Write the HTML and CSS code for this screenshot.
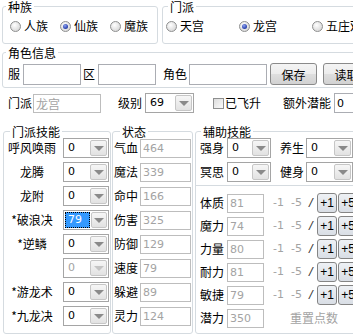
FILE: index.html
```html
<!DOCTYPE html>
<html lang="zh">
<head>
    <meta charset="UTF-8">
    <title>角色编辑</title>
    <link rel="stylesheet" href="styles.css">
</head>
<body>
    <div class="dialog">
        <div class="top-row">
            <div class="group race">
                <span class="group-title">种族</span>
                <label class="radio"><span class="dot"></span>人族</label>
                <label class="radio"><span class="dot on"></span>仙族</label>
                <label class="radio"><span class="dot"></span>魔族</label>
            </div>
            <div class="group sect">
                <span class="group-title">门派</span>
                <label class="radio"><span class="dot"></span>天宫</label>
                <label class="radio"><span class="dot on"></span>龙宫</label>
                <label class="radio"><span class="dot"></span>五庄观</label>
            </div>
        </div>

        <div class="group info">
            <span class="group-title">角色信息</span>
            <span class="lbl">服</span>
            <input type="text" class="edit server">
            <span class="lbl area-lbl">区</span>
            <input type="text" class="edit area">
            <span class="lbl role-lbl">角色</span>
            <input type="text" class="edit role">
            <button class="btn save">保存</button>
            <button class="btn load">读取</button>
        </div>

        <div class="line2">
            <span class="lbl">门派</span>
            <input type="text" class="edit dis sect-edit" value="龙宫" disabled>
            <span class="lbl level-lbl">级别</span>
            <div class="combo level"><span class="val">69</span><span class="arrow"></span></div>
            <span class="check"></span>
            <span class="lbl fly-lbl">已飞升</span>
            <span class="lbl extra-lbl">额外潜能</span>
            <input type="text" class="edit extra" value="0">
        </div>

        <div class="bottom">
            <div class="group skills">
                <span class="group-title">门派技能</span>
                <div class="srow"><span class="sname">呼风唤雨</span><div class="combo sk"><span class="val">0</span><span class="arrow"></span></div></div>
                <div class="srow"><span class="sname">龙腾</span><div class="combo sk"><span class="val">0</span><span class="arrow"></span></div></div>
                <div class="srow"><span class="sname">龙附</span><div class="combo sk"><span class="val">0</span><span class="arrow"></span></div></div>
                <div class="srow"><span class="sname">*破浪决</span><div class="combo sk focus"><span class="val">79</span><span class="arrow"></span></div></div>
                <div class="srow"><span class="sname">*逆鳞</span><div class="combo sk"><span class="val">0</span><span class="arrow"></span></div></div>
                <div class="srow"><span class="sname"></span><div class="combo sk off"><span class="val">0</span><span class="arrow"></span></div></div>
                <div class="srow"><span class="sname">*游龙术</span><div class="combo sk"><span class="val">0</span><span class="arrow"></span></div></div>
                <div class="srow"><span class="sname">*九龙决</span><div class="combo sk"><span class="val">0</span><span class="arrow"></span></div></div>
            </div>

            <div class="group stats">
                <span class="group-title">状态</span>
                <div class="strow"><span class="lbl">气血</span><input class="edit dis stat" value="464" disabled></div>
                <div class="strow"><span class="lbl">魔法</span><input class="edit dis stat" value="339" disabled></div>
                <div class="strow"><span class="lbl">命中</span><input class="edit dis stat" value="166" disabled></div>
                <div class="strow"><span class="lbl">伤害</span><input class="edit dis stat" value="325" disabled></div>
                <div class="strow"><span class="lbl">防御</span><input class="edit dis stat" value="129" disabled></div>
                <div class="strow"><span class="lbl">速度</span><input class="edit dis stat" value="79" disabled></div>
                <div class="strow"><span class="lbl">躲避</span><input class="edit dis stat" value="89" disabled></div>
                <div class="strow"><span class="lbl">灵力</span><input class="edit dis stat" value="124" disabled></div>
            </div>

            <div class="group aux">
                <span class="group-title">辅助技能</span>
                <div class="arow">
                    <span class="lbl">强身</span>
                    <div class="combo ax"><span class="val">0</span><span class="arrow"></span></div>
                    <span class="lbl ax-lbl2">养生</span>
                    <div class="combo ax2"><span class="val">0</span><span class="arrow"></span></div>
                </div>
                <div class="arow">
                    <span class="lbl">冥思</span>
                    <div class="combo ax"><span class="val">0</span><span class="arrow"></span></div>
                    <span class="lbl ax-lbl2">健身</span>
                    <div class="combo ax2"><span class="val">0</span><span class="arrow"></span></div>
                </div>
                <div class="sep"></div>
                <div class="prow first">
                    <span class="lbl">体质</span><input class="edit dis pt" value="81" disabled>
                    <span class="dec one">-1</span><span class="dec">-5</span><span class="slash">/</span>
                    <button class="pbtn">+1</button><button class="pbtn">+5</button>
                </div>
                <div class="prow">
                    <span class="lbl">魔力</span><input class="edit dis pt" value="74" disabled>
                    <span class="dec one">-1</span><span class="dec">-5</span><span class="slash">/</span>
                    <button class="pbtn">+1</button><button class="pbtn">+5</button>
                </div>
                <div class="prow">
                    <span class="lbl">力量</span><input class="edit dis pt" value="80" disabled>
                    <span class="dec one">-1</span><span class="dec">-5</span><span class="slash">/</span>
                    <button class="pbtn">+1</button><button class="pbtn">+5</button>
                </div>
                <div class="prow">
                    <span class="lbl">耐力</span><input class="edit dis pt" value="81" disabled>
                    <span class="dec one">-1</span><span class="dec">-5</span><span class="slash">/</span>
                    <button class="pbtn">+1</button><button class="pbtn">+5</button>
                </div>
                <div class="prow">
                    <span class="lbl">敏捷</span><input class="edit dis pt" value="79" disabled>
                    <span class="dec one">-1</span><span class="dec">-5</span><span class="slash">/</span>
                    <button class="pbtn">+1</button><button class="pbtn">+5</button>
                </div>
                <div class="prow">
                    <span class="lbl">潜力</span><input class="edit dis pt" value="350" disabled>
                    <span class="reset">重置点数</span>
                </div>
            </div>
        </div>
    </div>
</body>
</html>
```

FILE: styles.css
```css
body {
    margin: 0;
    background-color: #fff;
    font-family: "Noto Sans CJK SC", sans-serif;
    font-size: 12px;
    line-height: 14px;
    color: #000;
    width: 353px;
    height: 336px;
    overflow: hidden;
}
.dialog {
    width: 470px;
    padding: 6px 0 0 2px;
}
.group {
    position: relative;
    border: 1px solid #d5dbe0;
    border-radius: 3px;
    box-sizing: border-box;
}
.group-title {
    position: absolute;
    top: -6px;
    left: 3px;
    padding: 0 2px;
    background-color: #fff;
    line-height: 12px;
}
.lbl {
    flex: none;
    white-space: nowrap;
}

/* radios */
.top-row {
    display: flex;
    gap: 4px;
}
.race {
    width: 156px;
    height: 38px;
    padding: 12px 0 0 7px;
    display: flex;
}
.sect {
    width: 260px;
    height: 38px;
    padding: 12px 0 0 3px;
    display: flex;
}
.sect .group-title {
    left: 5px;
}
.radio {
    display: flex;
    align-items: center;
    gap: 2px;
    height: 14px;
    width: 50px;
    flex: none;
}
.sect .radio {
    width: 73px;
}
.dot {
    position: relative;
    width: 11px;
    height: 11px;
    box-sizing: border-box;
    border-radius: 50%;
    border: 1px solid #8e8f8f;
    background: radial-gradient(circle at 40% 35%, #ffffff 0, #e6e6e6 50%, #cfcfcf 100%);
    margin-right: 1px;
}
.dot.on::after {
    content: "";
    position: absolute;
    left: 2px;
    top: 2px;
    width: 5px;
    height: 5px;
    border-radius: 50%;
    background: radial-gradient(circle at 40% 35%, #8fa3ee 0, #3048b4 60%, #1a2a80 100%);
}

/* edits, combos, buttons */
.edit {
    height: 21px;
    margin: 0;
    padding: 0 2px;
    border: 1px solid #abadb3;
    box-sizing: border-box;
    background-color: #fff;
    font-family: "DejaVu Sans", sans-serif;
    font-size: 11px;
    color: #000;
    outline: none;
}
.edit.dis {
    color: #a3a3a3;
    border-color: #bdbdbd;
}
.combo {
    display: flex;
    height: 20px;
    padding: 1px;
    border: 1px solid #a5a5a5;
    box-sizing: border-box;
    background-color: #fff;
    flex: none;
}
.combo .val {
    flex: 1;
    padding-left: 3px;
    font-family: "DejaVu Sans", sans-serif;
    font-size: 11px;
    line-height: 16px;
}
.combo .arrow {
    width: 17px;
    display: flex;
    align-items: center;
    justify-content: center;
    border: 1px solid #c6c6c6;
    border-radius: 2px;
    box-sizing: border-box;
    background: linear-gradient(#f6f6f6, #e2e2e2);
}
.combo .arrow::after {
    content: "";
    margin-top: 1px;
    border-left: 5px solid transparent;
    border-right: 5px solid transparent;
    border-top: 5px solid #8a8a8a;
}
.combo.focus .val {
    flex: none;
    width: 25px;
    margin-right: 1px;
    box-sizing: border-box;
    background-color: #3399ff;
    color: #fff;
    outline: 1px dotted #000;
    outline-offset: -1px;
}
.combo.off .val {
    color: #a3a3a3;
}
.combo.off .arrow::after {
    border-top-color: #c4c4c4;
}
.btn {
    height: 22px;
    width: 47px;
    padding: 0;
    border: 1px solid #8a8a8a;
    border-radius: 3px;
    background: linear-gradient(#f4f4f4 0, #ececec 48%, #dedede 52%, #d2d2d2 100%);
    font-family: "Noto Sans CJK SC", sans-serif;
    font-size: 12px;
    color: #000;
    flex: none;
}

/* role info */
.info {
    margin-top: 8px;
    height: 36px;
    padding: 8px 0 0 5px;
    display: flex;
    align-items: center;
}
.info .edit {
    flex: none;
}
.server { margin-left: 3px; width: 58px; }
.area-lbl { margin-left: 2px; }
.area { margin-left: 3px; width: 58px; }
.role-lbl { margin-left: 7px; }
.role { margin-left: 2px; width: 78px; }
.save { margin-left: 3px; }
.load { margin-left: 6px; }

/* second line */
.line2 {
    margin-top: 5px;
    height: 20px;
    padding-left: 6px;
    display: flex;
    align-items: center;
}
.sect-edit {
    margin-left: 1px;
    width: 68px;
    height: 19px;
    flex: none;
    font-family: "Noto Sans CJK SC", sans-serif;
    font-size: 12px;
}
.level-lbl { margin-left: 17px; }
.level { margin-left: 3px; width: 49px; }
.check {
    margin-left: 19px;
    width: 11px;
    height: 11px;
    box-sizing: border-box;
    border: 1px solid #8e8f8f;
    background: linear-gradient(135deg, #dcdcdc, #fbfbfb);
    flex: none;
}
.fly-lbl { margin-left: 1px; }
.extra-lbl { margin-left: 22px; }
.extra { margin-left: 3px; width: 60px; height: 20px; flex: none; }

/* bottom groups */
.bottom {
    margin-top: 18px;
    display: flex;
    height: 203px;
}
.skills {
    margin-left: 1px;
    width: 108px;
    padding: 6px 0 0 4px;
}
.skills .group-title { left: 6px; }
.srow {
    display: flex;
    align-items: center;
    height: 20px;
    margin-bottom: 4px;
}
.sname {
    width: 48px;
    text-align: center;
    white-space: nowrap;
}
.combo.sk {
    margin-left: 7px;
    width: 46px;
}

.stats {
    margin-left: 1px;
    width: 81px;
    padding: 6px 0 0 1px;
}
.stats .group-title { left: 7px; }
.strow {
    display: flex;
    align-items: center;
    height: 20px;
    margin-bottom: 4px;
}
.stat {
    margin-left: 2px;
    width: 51px;
    height: 19px;
}

.aux {
    margin-left: 2px;
    width: 200px;
    padding-top: 6px;
}
.aux .group-title { left: 5px; }
.arow {
    display: flex;
    align-items: center;
    height: 20px;
    padding-left: 4px;
    margin-bottom: 4px;
}
.combo.ax { margin-left: 3px; width: 44px; }
.ax-lbl2 { margin-left: 9px; }
.combo.ax2 { margin-left: 2px; width: 47px; }
.sep {
    margin-top: -1px;
    border-top: 1px solid #d5dbe0;
}
.prow {
    display: flex;
    align-items: center;
    height: 20px;
    padding-left: 4px;
    margin-top: 3px;
}
.prow.first { margin-top: 7px; }
.pt {
    margin-left: 3px;
    width: 37px;
    height: 19px;
}
.dec {
    width: 18px;
    flex: none;
    color: #a3a3a3;
    font-family: "DejaVu Sans", sans-serif;
    font-size: 11px;
}
.dec.one {
    margin-left: 9px;
}
.slash {
    width: 8px;
    flex: none;
    color: #333;
    font-family: "Liberation Sans", sans-serif;
    font-size: 13px;
    font-style: italic;
}
.pbtn {
    width: 20px;
    height: 20px;
    padding: 0;
    margin-right: 1px;
    border: 1px solid #858585;
    border-radius: 3px;
    background: linear-gradient(#eef1f5, #d9dee5);
    font-family: "Liberation Sans", sans-serif;
    font-size: 12px;
    color: #000;
    flex: none;
}
.reset {
    margin-left: 26px;
    color: #a3a3a3;
    white-space: nowrap;
}
```
